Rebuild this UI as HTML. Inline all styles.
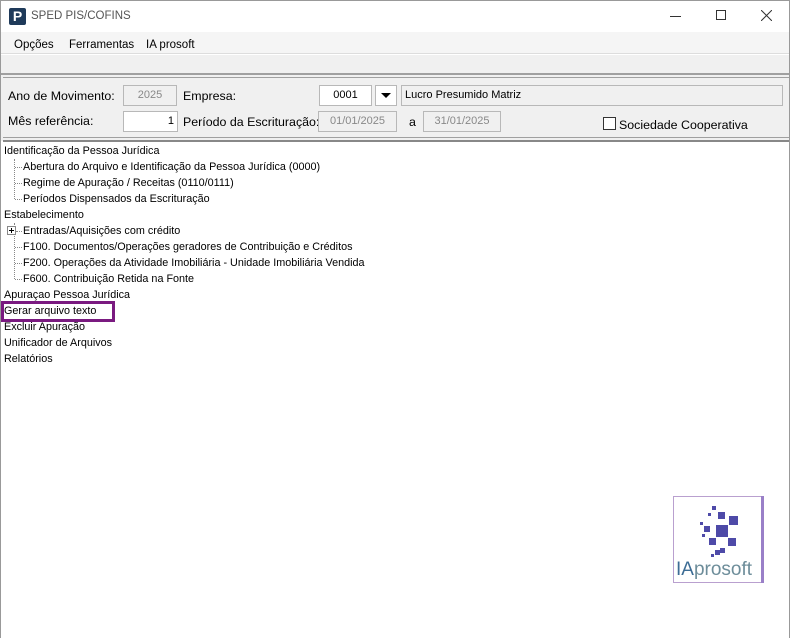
<!DOCTYPE html>
<html><head><meta charset="utf-8"><style>
*{margin:0;padding:0;box-sizing:border-box}
body{width:790px;height:638px;background:#fff;font-family:"Liberation Sans",sans-serif;position:relative;overflow:hidden;color:#000}
.a{position:absolute}
.t{font-size:10.8px;white-space:nowrap}
.l{font-size:12.4px;white-space:nowrap}
.inp{position:absolute;border:1px solid #b8b8b8;background:#f0f0f0;color:#888;font-size:11px;height:21px;line-height:19px}
.dot{position:absolute;border-top:1px dotted #888}
.vd{position:absolute;border-left:1px dotted #888}
</style></head><body>
<div class="a" style="left:0;top:0;width:790px;height:1px;background:#999"></div>
<div class="a" style="left:0;top:0;width:1px;height:638px;background:#999"></div>
<div class="a" style="left:789px;top:0;width:1px;height:638px;background:#999"></div>
<!-- title -->
<div class="a" style="left:9px;top:8px;width:17px;height:17px;background:#1f3a5a;border-radius:2px;color:#fff;font-weight:bold;font-size:14px;line-height:17px;text-align:center">P</div>
<div class="a t" style="left:31px;top:10px;font-size:11.5px;color:#555">SPED PIS/COFINS</div>
<div class="a" style="left:670px;top:16px;width:11px;height:1px;background:#333"></div>
<div class="a" style="left:716px;top:10px;width:10px;height:10px;border:1px solid #333"></div>
<svg class="a" style="left:761px;top:10px" width="11" height="11"><path d="M0 0L11 11M11 0L0 11" stroke="#333" stroke-width="1"/></svg>
<!-- menu -->
<div class="a" style="left:1px;top:32px;width:788px;height:22px;background:#f5f5f5;border-bottom:1px solid #ddd"></div>
<div class="a t" style="left:14px;top:39px;font-size:11.5px">Opções</div>
<div class="a t" style="left:69px;top:39px;font-size:11.5px">Ferramentas</div>
<div class="a t" style="left:146px;top:39px;font-size:11.5px">IA prosoft</div>
<div class="a" style="left:1px;top:55px;width:788px;height:19px;background:#f0f0f0"></div>
<div class="a" style="left:1px;top:73px;width:788px;height:2px;background:#a0a0a0"></div>
<!-- panel -->
<div class="a" style="left:1px;top:75px;width:788px;height:66px;background:#f0f0f0"></div>
<div class="a" style="left:3px;top:77px;width:786px;height:1px;background:#a0a0a0"></div>
<div class="a" style="left:3px;top:137px;width:786px;height:1px;background:#a0a0a0"></div>
<div class="a" style="left:3px;top:140px;width:786px;height:2px;background:#888"></div>
<div class="a l" style="left:8px;top:89px">Ano de Movimento:</div>
<div class="inp" style="left:123px;top:85px;width:54px;text-align:center">2025</div>
<div class="a l" style="left:183px;top:89px">Empresa:</div>
<div class="inp" style="left:319px;top:85px;width:53px;background:#fff;color:#000;text-align:center">0001</div>
<div class="inp" style="left:375px;top:85px;width:22px;background:#fff"><div style="position:absolute;left:5px;top:7px;border-left:5px solid transparent;border-right:5px solid transparent;border-top:5px solid #000"></div></div>
<div class="inp" style="left:401px;top:85px;width:382px;color:#000;padding-left:3px">Lucro Presumido Matriz</div>
<div class="a l" style="left:8px;top:114px">Mês referência:</div>
<div class="inp" style="left:123px;top:111px;width:55px;background:#fff;color:#000;text-align:right;padding-right:3px">1</div>
<div class="a l" style="left:183px;top:115px">Período da Escrituração:</div>
<div class="inp" style="left:318px;top:111px;width:79px;text-align:center">01/01/2025</div>
<div class="a l" style="left:409px;top:115px">a</div>
<div class="inp" style="left:423px;top:111px;width:78px;text-align:center">31/01/2025</div>
<div class="a" style="left:603px;top:117px;width:13px;height:13px;border:1px solid #333;background:#fff"></div>
<div class="a l" style="left:619px;top:118px">Sociedade Cooperativa</div>
<!-- tree -->
<div class="vd" style="left:14px;top:159px;height:40px"></div>
<div class="dot" style="left:15px;top:167px;width:7px"></div>
<div class="dot" style="left:15px;top:183px;width:7px"></div>
<div class="dot" style="left:15px;top:199px;width:7px"></div>
<div class="vd" style="left:14px;top:223px;height:56px"></div>
<div class="dot" style="left:15px;top:247px;width:7px"></div>
<div class="dot" style="left:15px;top:263px;width:7px"></div>
<div class="dot" style="left:15px;top:279px;width:7px"></div>
<div class="dot" style="left:16px;top:231px;width:6px"></div>
<div class="a" style="left:7px;top:226px;width:9px;height:9px;border:1px solid #888;background:#fff"><div style="position:absolute;left:1px;top:3px;width:5px;height:1px;background:#000"></div><div style="position:absolute;left:3px;top:1px;width:1px;height:5px;background:#000"></div></div>
<div class="a t" style="left:4px;top:145px">Identificação da Pessoa Jurídica</div>
<div class="a t" style="left:23px;top:161px">Abertura do Arquivo e Identificação da Pessoa Jurídica (0000)</div>
<div class="a t" style="left:23px;top:177px">Regime de Apuração / Receitas (0110/0111)</div>
<div class="a t" style="left:23px;top:193px">Períodos Dispensados da Escrituração</div>
<div class="a t" style="left:4px;top:209px">Estabelecimento</div>
<div class="a t" style="left:23px;top:225px">Entradas/Aquisições com crédito</div>
<div class="a t" style="left:23px;top:241px">F100. Documentos/Operações geradores de Contribuição e Créditos</div>
<div class="a t" style="left:23px;top:257px">F200. Operações da Atividade Imobiliária - Unidade Imobiliária Vendida</div>
<div class="a t" style="left:23px;top:273px">F600. Contribuição Retida na Fonte</div>
<div class="a t" style="left:4px;top:289px">Apuraçao Pessoa Jurídica</div>
<div class="a t" style="left:4px;top:305px">Gerar arquivo texto</div>
<div class="a" style="left:1px;top:301px;width:114px;height:21px;border:3px solid #7a1a80"></div>
<div class="a t" style="left:4px;top:321px">Excluir Apuração</div>
<div class="a t" style="left:4px;top:337px">Unificador de Arquivos</div>
<div class="a t" style="left:4px;top:353px">Relatórios</div>
<!-- logo -->
<div class="a" style="left:673px;top:496px;width:91px;height:87px;border:1px solid #b9a0cf;background:#fff">
<svg width="89" height="85" style="position:absolute;left:0;top:0">
<g fill="#4e4aa8">
<rect x="38" y="9" width="4" height="4"/><rect x="34" y="16" width="3" height="3"/><rect x="44" y="15" width="7" height="7"/>
<rect x="26" y="25" width="3" height="3"/><rect x="30" y="29" width="6" height="6"/><rect x="55" y="19" width="9" height="9"/>
<rect x="42" y="28" width="12" height="12"/><rect x="28" y="37" width="3" height="3"/>
<rect x="35" y="41" width="7" height="7"/><rect x="54" y="41" width="8" height="8"/><rect x="46" y="51" width="5" height="5"/>
<rect x="41" y="53" width="5" height="5"/><rect x="37" y="57" width="3" height="3"/>
</g>
<text x="2" y="78" font-family="Liberation Sans,sans-serif" font-size="19" fill="#3d6d95">IA<tspan fill="#6d8d9a">prosoft</tspan></text>
</svg>
<div style="position:absolute;right:-1px;top:-1px;width:3px;height:87px;background:#9a80c8"></div>
</div>
</body></html>
